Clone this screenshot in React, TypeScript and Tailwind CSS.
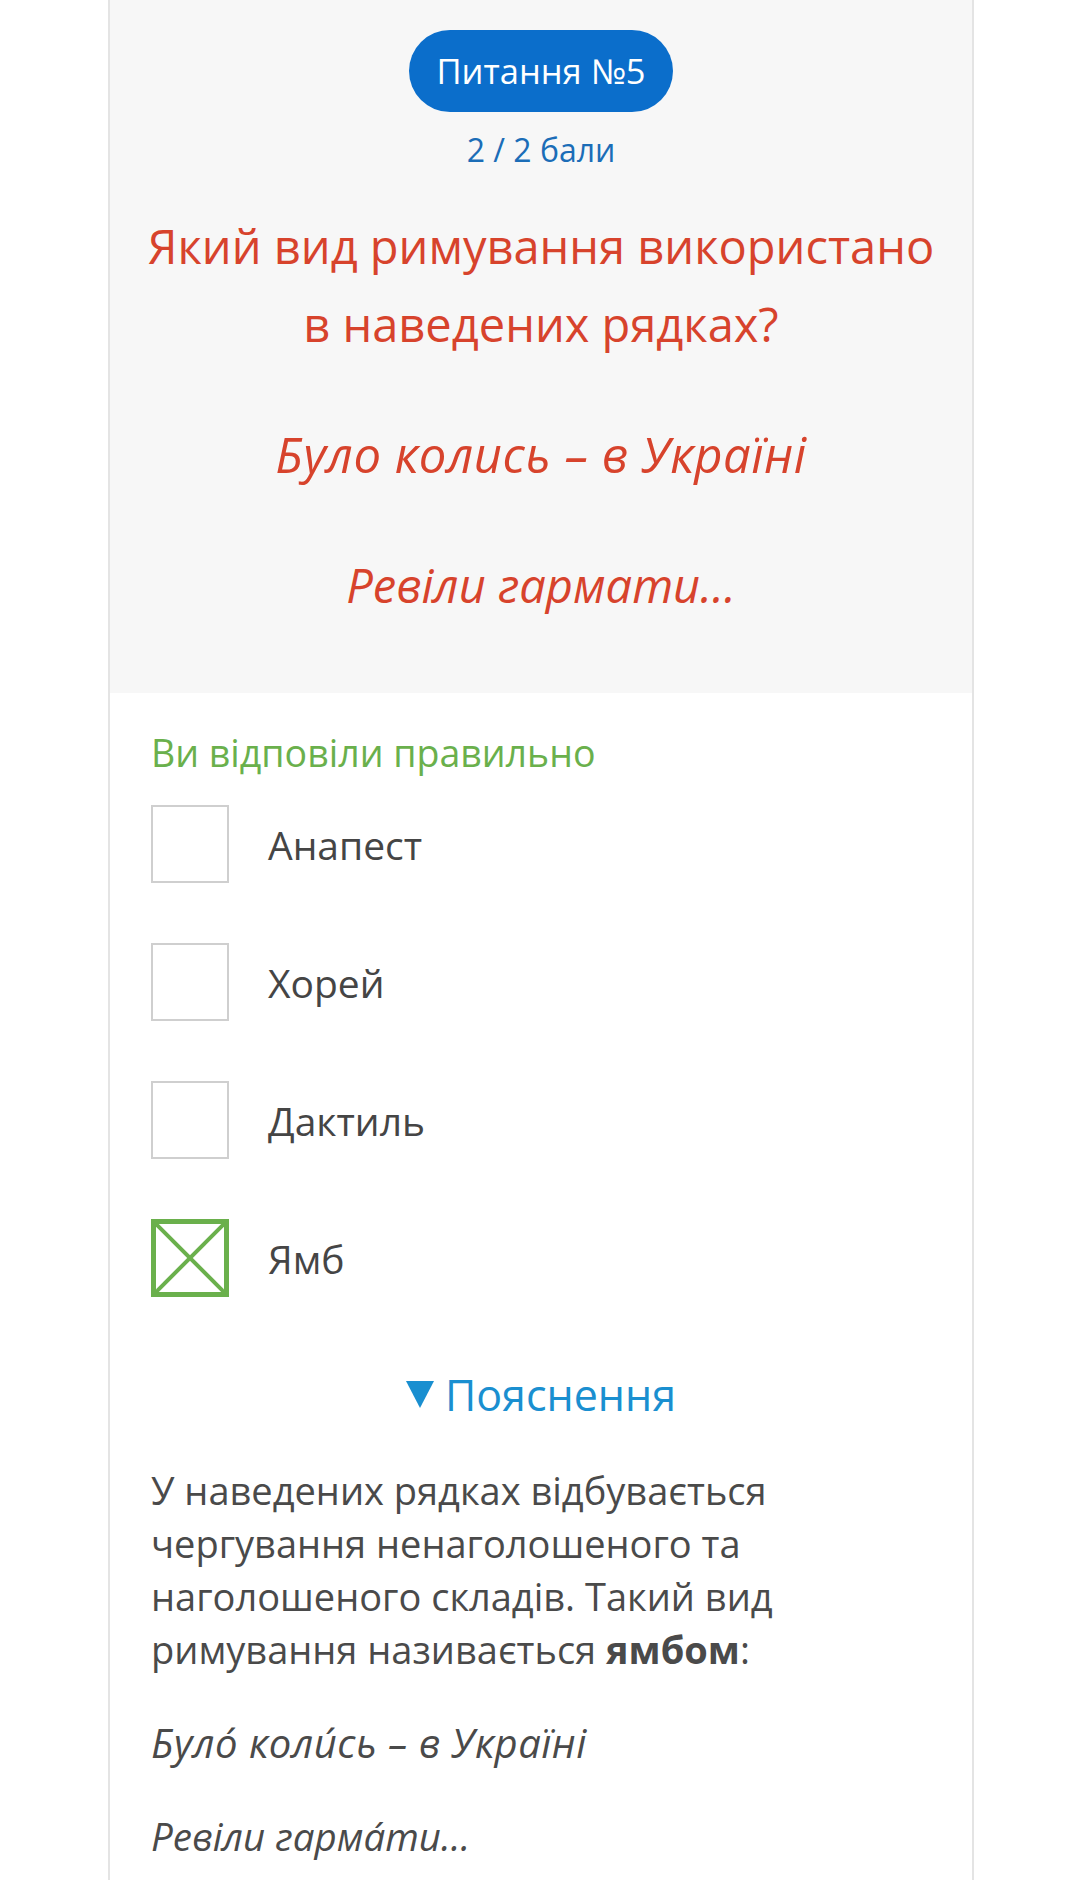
import React from "react";

const font = { fontFamily: '"Open Sans", "Noto Sans", sans-serif' };

function Box({ checked }: { checked?: boolean }) {
  if (checked) {
    return (
      <div className="w-[78px] h-[78px] shrink-0 border-[5px] border-[#6ab04c] bg-white">
        <svg viewBox="0 0 68 68" className="w-full h-full block">
          <line x1="0" y1="0" x2="68" y2="68" stroke="#6ab04c" strokeWidth="4" />
          <line x1="68" y1="0" x2="0" y2="68" stroke="#6ab04c" strokeWidth="4" />
        </svg>
      </div>
    );
  }
  return <div className="w-[78px] h-[78px] shrink-0 border-2 border-[#cfcfcf] bg-white" />;
}

function Row({ label, checked }: { label: string; checked?: boolean }) {
  return (
    <div className="flex items-center h-[78px]">
      <Box checked={checked} />
      <span className="ml-[39px] text-[39px] text-[#454545] leading-none">{label}</span>
    </div>
  );
}

export default function App() {
  return (
    <div className="w-[1080px] min-h-[1880px] bg-white" style={font}>
      <div className="mx-[108px] w-[866px] border-x-2 border-[#e4e4e4] min-h-[1880px]">
        <div className="bg-[#f7f7f7] flex flex-col items-center pt-[30px] pb-[69px]">
          <div className="h-[82px] w-[264px] rounded-full bg-[#0b6ecb] flex items-center justify-center">
            <span className="text-white text-[34.5px] leading-none">Питання №5</span>
          </div>
          <div className="mt-[18px] text-[#1b6db7] text-[32px] leading-[40px]">2 / 2 бали</div>
          <div className="mt-[37px] text-[#d7432c] text-[47px] leading-[78px] text-center">
            Який вид римування використано
            <br />
            в наведених рядках?
          </div>
          <div className="mt-[52px] text-[#d7432c] text-[49px] leading-[78px] italic tracking-[0.5px]">Було колись – в Україні</div>
          <div className="mt-[53px] text-[#d7432c] text-[47px] leading-[78px] italic">Ревіли гармати…</div>
        </div>
        <div className="px-[41px] pt-[36px] pb-[40px] flex flex-col">
          <div className="text-[#6ab04c] text-[37.5px] leading-[48px]">Ви відповіли правильно</div>
          <div className="mt-[28px] flex flex-col gap-[60px]">
            <Row label="Анапест" />
            <Row label="Хорей" />
            <Row label="Дактиль" />
            <Row label="Ямб" checked />
          </div>
          <div className="mt-[72px] flex items-center justify-center h-[50px] text-[#1a8fd0]">
            <svg width="28" height="27" viewBox="0 0 28 27" className="mr-[11px]">
              <polygon points="0,0 28,0 14,27" fill="#1a8fd0" />
            </svg>
            <span className="text-[43px] leading-none">Пояснення</span>
          </div>
          <div className="mt-[45px] text-[#4a4a4a] text-[38px] leading-[53px]">
            У наведених рядках відбувається
            <br />
            чергування ненаголошеного та
            <br />
            наголошеного складів. Такий вид
            <br />
            римування називається <b className="font-bold">ямбом</b>:
          </div>
          <div className="mt-[40px] text-[#4a4a4a] text-[40px] leading-[53px] italic tracking-[0.5px]">Було́ коли́сь – в Україні</div>
          <div className="mt-[41px] text-[#4a4a4a] text-[38.5px] leading-[53px] italic">Ревіли гарма́ти…</div>
        </div>
      </div>
    </div>
  );
}
